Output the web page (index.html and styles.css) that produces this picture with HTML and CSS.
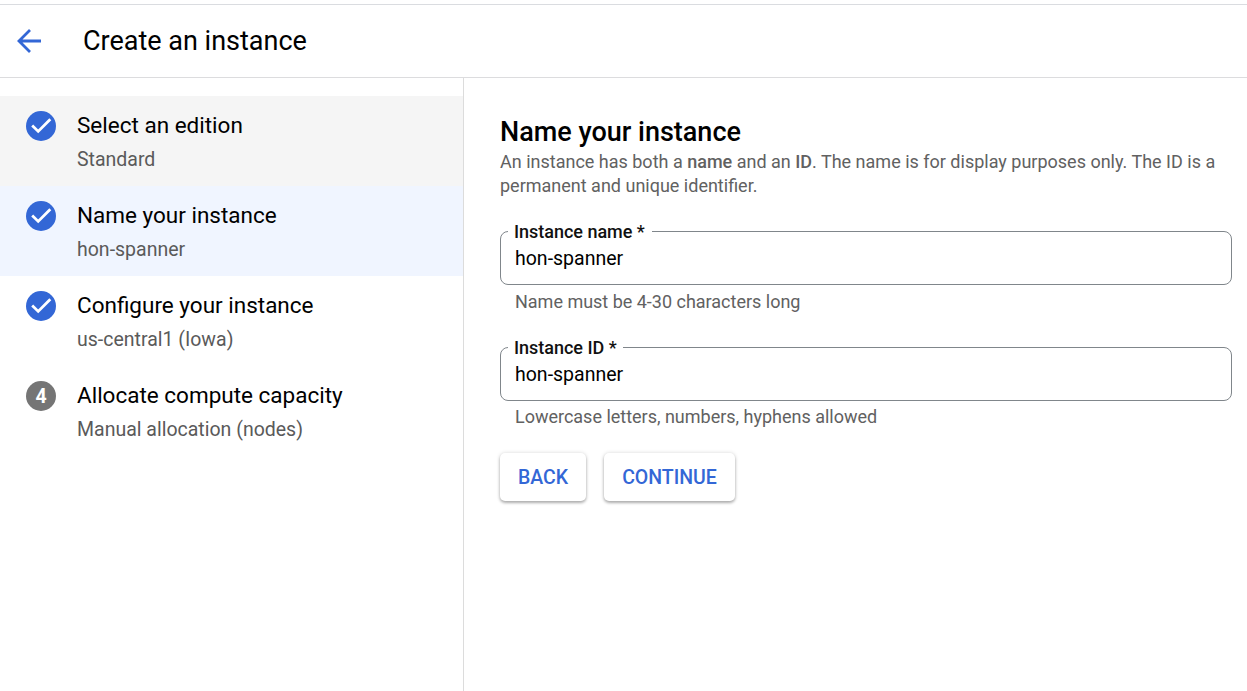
FILE: index.html
```html
<!DOCTYPE html>
<html lang="en">
<head>
<meta charset="utf-8">
<title>Create an instance</title>
<link rel="stylesheet" href="styles.css">
</head>
<body>
<svg class="defs" width="0" height="0" aria-hidden="true">
  <symbol id="check" viewBox="0 0 30 30">
    <circle cx="15" cy="15" r="15" fill="#3367d6"/>
    <path d="M6.2 14.6l6 5.8L24.3 8.2" fill="none" stroke="#fff" stroke-width="2.8"/>
  </symbol>
</svg>
<header class="topbar">
  <svg class="back-arrow" viewBox="0 0 26 26"><path d="M25 13H3M14 2L3 13l11 11" fill="none" stroke="#3367d6" stroke-width="2.8"/></svg>
  <h1 class="page-title">Create an instance</h1>
</header>
<div class="layout">
  <nav class="steps">
    <div class="step step-hover">
      <svg class="step-icon"><use href="#check"/></svg>
      <div class="step-text"><div class="step-title">Select an edition</div><div class="step-sub">Standard</div></div>
    </div>
    <div class="step step-active">
      <svg class="step-icon"><use href="#check"/></svg>
      <div class="step-text"><div class="step-title">Name your instance</div><div class="step-sub">hon-spanner</div></div>
    </div>
    <div class="step">
      <svg class="step-icon"><use href="#check"/></svg>
      <div class="step-text"><div class="step-title">Configure your instance</div><div class="step-sub">us-central1 (Iowa)</div></div>
    </div>
    <div class="step">
      <div class="step-icon step-number">4</div>
      <div class="step-text"><div class="step-title">Allocate compute capacity</div><div class="step-sub">Manual allocation (nodes)</div></div>
    </div>
  </nav>
  <main class="content">
    <h2 class="heading">Name your instance</h2>
    <p class="intro">An instance has both a <b>name</b> and an <b>ID</b>. The name is for display purposes only. The ID is a<br>permanent and unique identifier.</p>
    <fieldset class="field">
      <legend class="label">Instance name *</legend>
      <div class="value">hon-spanner</div>
    </fieldset>
    <div class="hint">Name must be 4-30 characters long</div>
    <fieldset class="field field-id">
      <legend class="label">Instance ID *</legend>
      <div class="value">hon-spanner</div>
    </fieldset>
    <div class="hint hint-id">Lowercase letters, numbers, hyphens allowed</div>
    <div class="actions">
      <button class="btn btn-back">BACK</button>
      <button class="btn btn-continue">CONTINUE</button>
    </div>
  </main>
</div>
</body>
</html>
```
FILE: styles.css
```css
* { box-sizing: border-box; }
body {
  margin: 0;
  height: 691px;
  padding-top: 4px;
  display: flex;
  flex-direction: column;
  overflow: hidden;
  background: #fff;
  color: #000;
  font-family: Roboto, sans-serif;
  white-space: nowrap;
}
.defs { display: none; }
.topbar {
  flex: none;
  display: flex;
  align-items: center;
  height: 74px;
  padding-left: 16px;
  gap: 41px;
  border-top: 1px solid #dadce0;
  border-bottom: 1px solid #dcdcde;
}
.back-arrow { width: 26px; height: 26px; }
.page-title { margin: 0; font-size: 27px; line-height: 36px; font-weight: 400; }
.layout { flex: 1; display: flex; }
.steps { width: 464px; padding-top: 18px; border-right: 1px solid #dcdcdc; }
.step { display: flex; height: 90px; padding: 15px 0 0 26px; gap: 21px; }
.step-hover { background: #f5f5f5; }
.step-active { background: #f0f5ff; }
.step-icon { width: 30px; height: 30px; flex: none; }
.step-number {
  border-radius: 50%;
  background: #757575;
  color: #fff;
  font-size: 19.5px;
  font-weight: 700;
  line-height: 31px;
  text-align: center;
}
.step-title { font-size: 22.5px; line-height: 28px; }
.step-sub { margin-top: 7px; font-size: 19.5px; line-height: 28px; color: #5a5a5a; }
.content { flex: 1; padding: 36px 15px 0 36px; }
.heading { margin: 0; font-size: 27px; line-height: 36px; font-weight: 500; }
.intro { margin: 0; font-size: 18px; line-height: 24px; color: #616161; }
.intro b { font-weight: 500; }
.field {
  min-width: 0;
  height: 64px;
  margin: 23px 0 0;
  padding: 0 7px;
  border: 1px solid #80868b;
  border-radius: 8px;
}
.label { height: 20px; padding: 0 7px 0 6px; font-size: 18px; line-height: 22px; letter-spacing: -.02px; font-weight: 500; color: #111; }
.value { padding-left: 7px; font-size: 19.5px; line-height: 28px; margin-top: 4px; }
.hint { padding-left: 15px; margin-top: 5px; font-size: 18px; line-height: 24px; letter-spacing: -.01px; color: #616161; }
.field-id { margin-top: 23px; }
.field-id .label { padding-right: 6px; }
.hint-id { margin-top: 4px; }
.actions { display: flex; gap: 18px; margin-top: 24px; }
.btn {
  height: 48px;
  padding: 2px 0 0;
  border: 0;
  border-radius: 5px;
  background: #fff;
  box-shadow: 0 2px 3px rgba(0,0,0,.28), 0 0 4px rgba(0,0,0,.14);
  color: #3367d6;
  font: 500 19.5px/46px Roboto, sans-serif;
}
.btn-back { width: 86px; }
.btn-continue { width: 131px; }
```
